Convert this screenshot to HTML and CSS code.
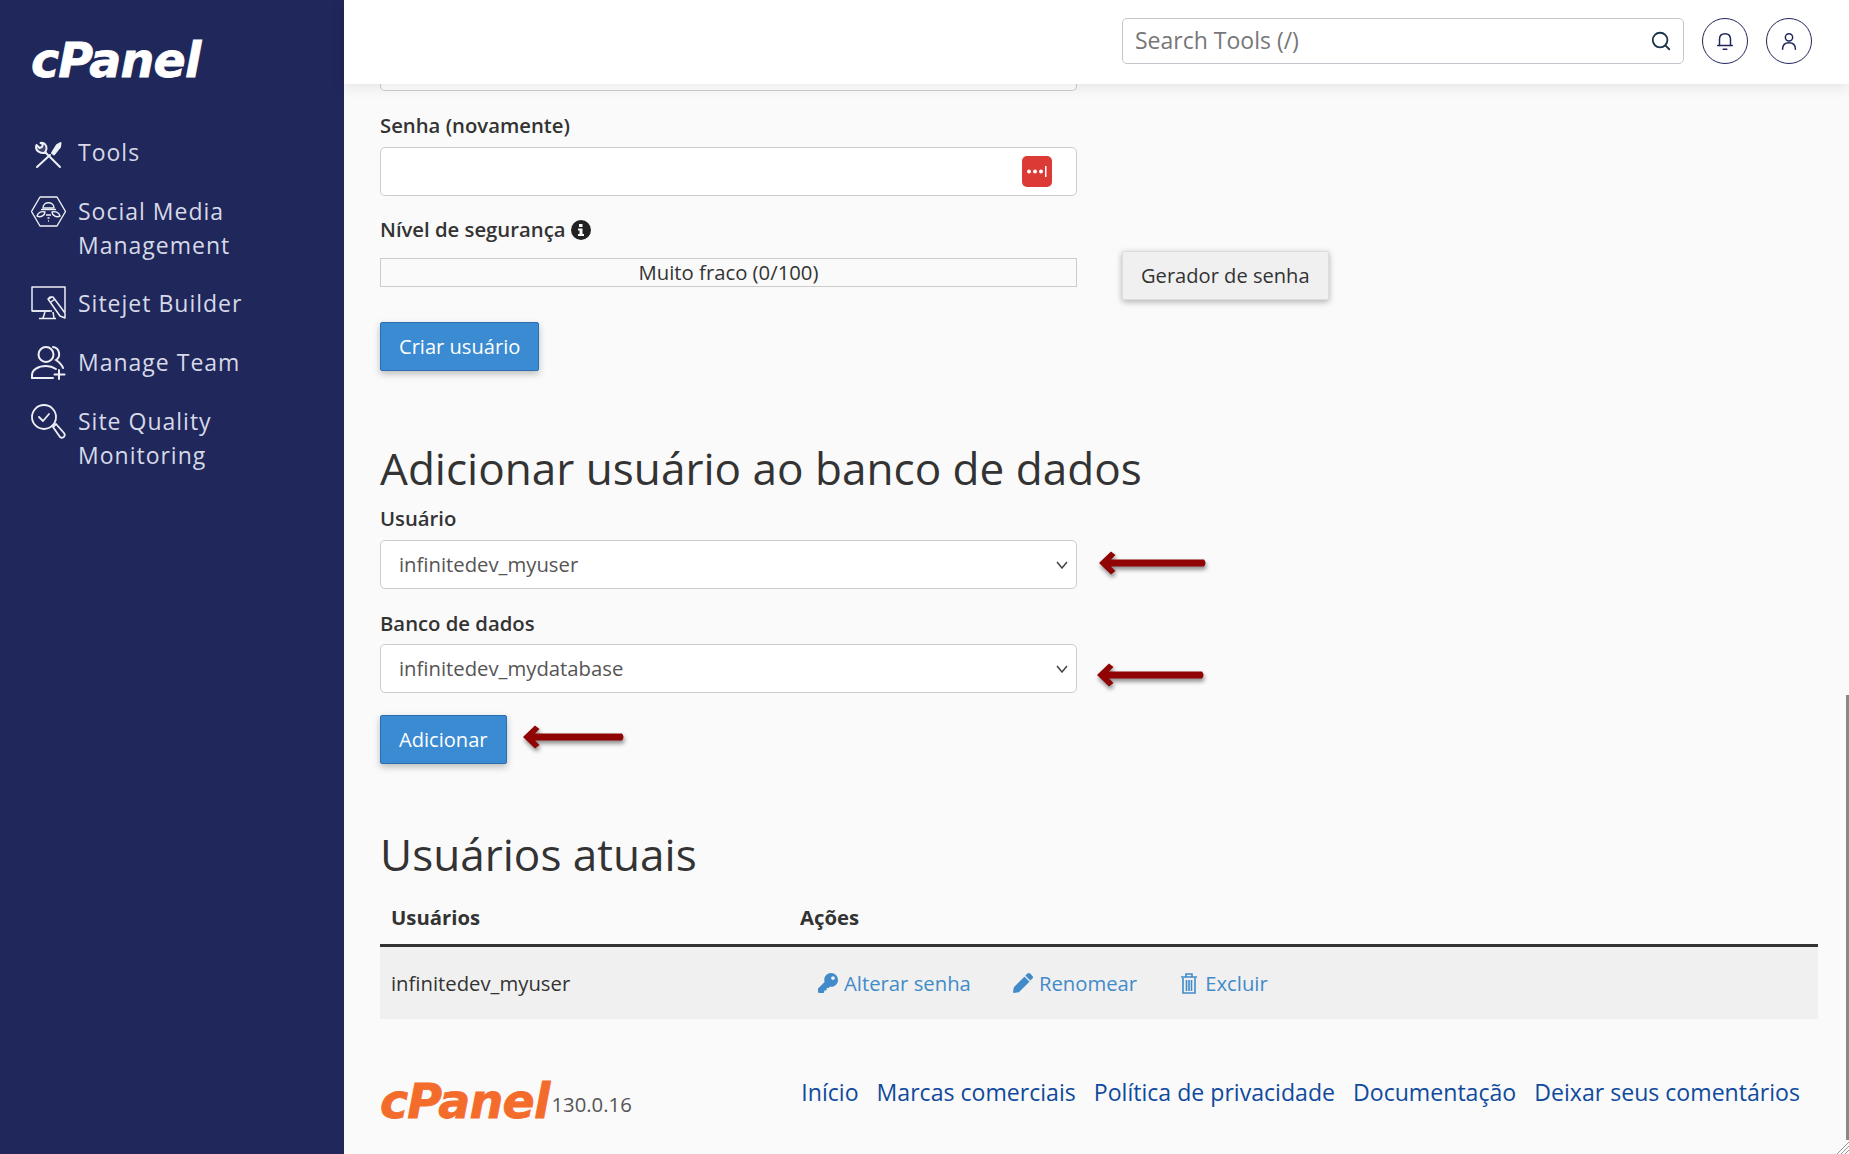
FILE: index.html
```html
<!DOCTYPE html>
<html lang="pt-BR">
<head>
  <meta charset="utf-8">
  <title>Bancos de dados MySQL - cPanel</title>
  <link rel="stylesheet" href="styles.css">
</head>
<body>
  <aside class="sidebar">
    <div class="brand">cPanel</div>
    <nav class="nav">
      <a class="nav-item">
        <svg class="nav-icon" viewBox="0 0 35 35" fill="none" stroke="currentColor" stroke-width="2" stroke-linecap="round" stroke-linejoin="round">
          <path d="M6 32 L19 20"/>
          <path d="M29 32 L14 17"/>
          <path d="M14 18 C9 18.500 5 16 5 12 L5.500 10 L8.500 13 L11 12 L12 9 L9.500 8 C13 7 16 10 15.500 14 L14 18" fill="currentColor" fill-opacity="0.15"/>
          <path d="M21 18 L26 10 L29.500 8 L29 12 L23 19.500 Z" fill="currentColor"/>
        </svg>
        <span>Tools</span>
      </a>
      <a class="nav-item">
        <svg class="nav-icon" viewBox="0 0 35 35" fill="none" stroke="currentColor" stroke-width="1.4" stroke-linejoin="round">
          <path d="M9 3 H26 L34.500 17.500 L26 32 H9 L0.500 17.500 Z"/>
          <path d="M12 14 C12 7 23 7 23 14 Z"/>
          <path d="M10 15.500 H25"/>
          <path d="M6 22 C7 18 11 17 14 18 C14 21 10 24 6 22 Z"/>
          <path d="M29 22 C28 18 24 17 21 18 C21 21 25 24 29 22 Z"/>
          <path d="M15 21 H20 M16.500 24 H18.500 M17 27 H18"/>
        </svg>
        <span>Social Media Management</span>
      </a>
      <a class="nav-item">
        <svg class="nav-icon" viewBox="0 0 35 35" fill="none" stroke="currentColor" stroke-width="1.5" stroke-linejoin="round">
          <path d="M21 25 H1 V1 H34 V26"/>
          <path d="M1 25 H19 M14 26 L12 32 M22 26 L23 32 M8 32.500 H25"/>
          <path d="M17 13 L19 11 L22 11 L34 27 L34 32 L29 30 Z" fill="#20275a"/>
          <path d="M18 13 L21 11 M20 16 L24 13"/>
        </svg>
        <span>Sitejet Builder</span>
      </a>
      <a class="nav-item">
        <svg class="nav-icon" viewBox="0 0 35 35" fill="none" stroke="currentColor" stroke-width="2" stroke-linecap="round">
          <circle cx="15" cy="9.500" r="7.500"/>
          <path d="M22 2 C29 3 30 12 25 15 C28 17 31 20 32 23"/>
          <path d="M1 33 V30 C1 25 7 21 15 21 C19 21 22 22 25 24"/>
          <path d="M1 33 H22"/>
          <path d="M28 25 V34 M23.500 29.500 H33.500"/>
        </svg>
        <span>Manage Team</span>
      </a>
      <a class="nav-item">
        <svg class="nav-icon" viewBox="0 0 35 35" fill="none" stroke="currentColor" stroke-width="1.800" stroke-linecap="round" stroke-linejoin="round">
          <circle cx="13" cy="13" r="12"/>
          <path d="M8 13 L12 17 L18 10"/>
          <path d="M22 23 L25 20 L33 29 C35 32 32 35 29 33 Z"/>
        </svg>
        <span>Site Quality Monitoring</span>
      </a>
    </nav>
  </aside>

  <div class="main">
    <header class="topbar">
      <div class="search">
        <input class="search-input" type="text" placeholder="Search Tools (/)">
        <svg class="search-icon" viewBox="0 0 24 24" fill="none" stroke="#1d3349" stroke-width="2" stroke-linecap="round">
          <circle cx="11" cy="11" r="8"/>
          <path d="M17 17 L21 21"/>
        </svg>
      </div>
      <button class="round-btn">
        <svg viewBox="0 0 24 24" fill="none" stroke="#20275a" stroke-width="1.600" stroke-linecap="round" stroke-linejoin="round">
          <path d="M6 17 V10 C6 6 8.500 4 12 4 C15.500 4 18 6 18 10 V17"/>
          <path d="M4 17 H20 M10 21 H14"/>
        </svg>
      </button>
      <button class="round-btn">
        <svg viewBox="0 0 24 24" fill="none" stroke="#20275a" stroke-width="1.600" stroke-linecap="round">
          <circle cx="12" cy="8" r="4"/>
          <path d="M5 21 C5 16 8 14 12 14 C16 14 19 16 19 21"/>
        </svg>
      </button>
    </header>

    <main class="content">
      <div class="cut-input"></div>

      <label class="field-label wide">Senha (novamente)</label>
      <div class="password-box">
        <span class="pass-badge">
          <svg viewBox="0 0 30 31" fill="#fff">
            <circle cx="7" cy="15.500" r="2"/>
            <circle cx="13" cy="15.500" r="2"/>
            <circle cx="19" cy="15.500" r="2"/>
            <rect x="23" y="10" width="1.500" height="11"/>
          </svg>
        </span>
      </div>

      <label class="field-label">Nível de segurança
        <svg class="info-icon" viewBox="0 0 20 20">
          <circle cx="10" cy="10" r="10" fill="#222"/>
          <path d="M8 4 H11.500 V7 H8 Z M7 8.500 H11.500 V14 H13 V16 H7 V14 H8.500 V10.500 H7 Z" fill="#fafafa"/>
        </svg>
      </label>
      <div class="strength-row">
        <div class="strength-bar">Muito fraco (0/100)</div>
        <button class="btn">Gerador de senha</button>
      </div>

      <button class="btn btn-primary btn-create">Criar usuário</button>

      <h2 class="section-title">Adicionar usuário ao banco de dados</h2>
      <label class="field-label tight">Usuário</label>
      <div class="select-wrap">
        <select class="field-select">
          <option>infinitedev_myuser</option>
        </select>
        <svg class="chevron" viewBox="0 0 12 8" fill="none" stroke="#444" stroke-width="1.500"><path d="M1 1 L6 7 L11 1"/></svg>
      </div>
      <label class="field-label wide">Banco de dados</label>
      <div class="select-wrap close">
        <select class="field-select">
          <option>infinitedev_mydatabase</option>
        </select>
        <svg class="chevron" viewBox="0 0 12 8" fill="none" stroke="#444" stroke-width="1.500"><path d="M1 1 L6 7 L11 1"/></svg>
      </div>
      <button class="btn btn-primary btn-add">Adicionar</button>

      <h2 class="section-title second">Usuários atuais</h2>
      <table class="users-table">
        <thead>
          <tr>
            <th class="col-user">Usuários</th>
            <th>Ações</th>
          </tr>
        </thead>
        <tbody>
          <tr>
            <td>infinitedev_myuser</td>
            <td>
              <div class="actions">
                <a class="action">
                  <svg viewBox="0 0 512 512" fill="currentColor"><path d="M512 176.001C512 273.203 433.202 352 336 352c-11.22 0-22.19-1.062-32.827-3.069l-24.012 27.014A23.999 23.999 0 0 1 261.223 384H224v40c0 13.255-10.745 24-24 24h-40v40c0 13.255-10.745 24-24 24H24c-13.255 0-24-10.745-24-24v-78.059c0-6.365 2.529-12.47 7.029-16.971l161.802-161.802C163.108 213.814 160 195.271 160 176 160 78.798 238.797.001 335.999 0 433.488-.001 512 78.511 512 176.001zM336 128c0 26.51 21.49 48 48 48s48-21.49 48-48-21.49-48-48-48-48 21.49-48 48z"/></svg>
                  Alterar senha
                </a>
                <a class="action">
                  <svg viewBox="0 0 512 512" fill="currentColor"><path d="M497.9 142.1l-46.1 46.1c-4.7 4.7-12.3 4.7-17 0l-111-111c-4.7-4.7-4.7-12.3 0-17l46.1-46.1c18.7-18.7 49.1-18.7 67.9 0l60.1 60.1c18.8 18.7 18.8 49.1 0 67.9zM284.2 99.8L21.6 362.4.4 483.9c-2.9 16.4 11.4 30.6 27.8 27.8l121.500-21.300 262.600-262.600c4.700-4.700 4.700-12.300 0-17l-111-111c-4.800-4.700-12.400-4.700-17.100 0z"/></svg>
                  Renomear
                </a>
                <a class="action">
                  <svg viewBox="0 0 18 22" fill="none" stroke="currentColor" stroke-width="1.600">
                    <path d="M1 5 H17 M6 5 V2 H12 V5"/>
                    <path d="M3 6 V21 H15 V6"/>
                    <path d="M6.500 8 V19 M9 8 V19 M11.500 8 V19"/>
                  </svg>
                  Excluir
                </a>
              </div>
            </td>
          </tr>
        </tbody>
      </table>

      <footer class="footer">
        <div class="footer-brand">
          <span class="footer-logo">cPanel</span>
          <span class="version">130.0.16</span>
        </div>
        <div class="footer-links">
          <a>Início</a>
          <a>Marcas comerciais</a>
          <a>Política de privacidade</a>
          <a>Documentação</a>
          <a>Deixar seus comentários</a>
        </div>
      </footer>

      <!-- setas vermelhas desenhadas por cima da captura -->
      <svg class="arrow arrow-user" viewBox="0 0 110 24"><path d="M1 12 L13 0.500 L17.500 4 L13 8.500 H106 Q109 12 106 15.500 H13 L17.500 20 L13 23.500 Z"/></svg>
      <svg class="arrow arrow-db" viewBox="0 0 110 24"><path d="M1 12 L13 0.500 L17.500 4 L13 8.500 H106 Q109 12 106 15.500 H13 L17.500 20 L13 23.500 Z"/></svg>
      <svg class="arrow arrow-add" viewBox="0 0 110 24"><path d="M1 12 L13 0.500 L17.500 4 L13 8.500 H100 Q103 12 100 15.500 H13 L17.500 20 L13 23.500 Z"/></svg>
    </main>

    <div class="scroll-thumb"></div>
    <svg class="resize-grip" viewBox="0 0 12 12" stroke="#999" stroke-width="1"><path d="M0 12 L12 0 M4 12 L12 4 M8 12 L12 8"/></svg>
  </div>
</body>
</html>
```

FILE: styles.css
```css
* {
  box-sizing: border-box;
}
html, body {
  height: 100%;
}
body {
  margin: 0;
  display: flex;
  overflow: hidden;
  font-family: "Open Sans", Arial, sans-serif;
  font-size: 20.3px;
  color: #333;
  background-color: #fafafa;
}

/* barra lateral */
.sidebar {
  width: 344px;
  flex-shrink: 0;
  background-color: #20275a;
  padding: 35px 30px 0 31px;
}
.brand {
  font-family: "DejaVu Sans", Arial, sans-serif;
  font-style: italic;
  font-weight: 700;
  font-size: 47.5px;
  line-height: 52px;
  letter-spacing: -0.8px;
  color: #fff;
  -webkit-text-stroke: 0.8px #fff;
}
.nav {
  margin-top: 35.5px;
}
.nav-item {
  display: flex;
  align-items: flex-start;
  gap: 12px;
  padding: 12px 0;
  font-size: 23px;
  line-height: 34px;
  letter-spacing: 1px;
  color: #d6d9e8;
}
.nav-icon {
  width: 35px;
  height: 35px;
  flex-shrink: 0;
  color: #eef0f6;
}

/* topo */
.main {
  position: relative;
  flex: 1;
  min-width: 0;
  display: flex;
  flex-direction: column;
}
.topbar {
  position: relative;
  z-index: 2;
  height: 84px;
  flex-shrink: 0;
  display: flex;
  align-items: flex-start;
  justify-content: flex-end;
  gap: 17.5px;
  padding: 18px 37px 0 0;
  background-color: #fff;
  box-shadow: 0 2px 14px rgba(0, 0, 0, 0.1);
}
.search {
  position: relative;
  width: 562px;
  height: 46px;
}
.search-input {
  width: 100%;
  height: 100%;
  padding: 0 40px 2px 12px;
  border: 1px solid #c4c4cc;
  border-radius: 5px;
  font-family: inherit;
  font-size: 23px;
  background-color: #fff;
}
.search-input::placeholder {
  color: #777;
}
.search-icon {
  position: absolute;
  top: 12px;
  right: 12px;
  width: 22px;
  height: 22px;
}
.round-btn {
  width: 46px;
  height: 46px;
  padding: 11px;
  border: 1.5px solid #20275a;
  border-radius: 50%;
  background-color: #fff;
}
.round-btn + .round-btn {
  margin-left: 1px;
}
.round-btn svg {
  display: block;
}

/* conteudo */
.content {
  position: relative;
  flex: 1;
  display: flex;
  flex-direction: column;
  align-items: flex-start;
  padding: 0 31px 0 36px;
}
.cut-input {
  width: 697px;
  height: 7px;
  flex-shrink: 0;
  background-color: #fff;
  border: 1px solid #ccc;
  border-top: none;
  border-radius: 0 0 5px 5px;
}
.field-label {
  display: flex;
  align-items: center;
  gap: 6px;
  margin-top: 20px;
  font-weight: 600;
  line-height: 27px;
  color: #333;
}
.field-label.wide {
  margin-top: 21px;
}
.field-label.tight {
  margin-top: 7px;
}
.info-icon {
  width: 20px;
  height: 20px;
}
.password-box {
  position: relative;
  width: 697px;
  height: 49px;
  margin-top: 8px;
  background-color: #fff;
  border: 1px solid #ccc;
  border-radius: 5px;
}
.pass-badge {
  position: absolute;
  top: 8px;
  right: 24px;
  width: 30px;
  height: 31px;
  background-color: #dc3a35;
  border-radius: 5px;
}
.pass-badge svg {
  display: block;
}
.strength-row {
  display: flex;
  align-items: flex-start;
  gap: 45px;
  margin-top: 8px;
}
.strength-bar {
  width: 697px;
  height: 29px;
  margin-top: 7px;
  border: 1px solid #ccc;
  background-color: #fafafa;
  text-align: center;
  line-height: 26px;
  color: #333;
}
.btn {
  height: 49px;
  padding: 0 18px;
  border: 1px solid #ddd;
  border-radius: 2px;
  font-family: inherit;
  font-size: 20.1px;
  color: #333;
  background-color: #f0f0f0;
  box-shadow: 0 2px 6px rgba(0, 0, 0, 0.3);
}
.btn-primary {
  color: #fff;
  background-color: #3a8bd2;
  border-color: #2c6eae;
  box-shadow: 0 3px 7px rgba(0, 0, 0, 0.25);
}
.btn-create {
  margin-top: 22px;
}
.btn-add {
  margin-top: 22px;
}
.section-title {
  margin: 67px 0 0;
  font-size: 44.1px;
  font-weight: 400;
  line-height: 60px;
  color: #333;
}
.section-title.second {
  margin-top: 60px;
}
.select-wrap {
  position: relative;
  width: 697px;
  height: 49px;
  margin-top: 8px;
  flex-shrink: 0;
}
.select-wrap.close {
  margin-top: 7px;
}
.field-select {
  appearance: none;
  width: 100%;
  height: 100%;
  padding: 0 13px 2px 18px;
  font-family: inherit;
  font-size: 20.3px;
  color: #555;
  background-color: #fff;
  border: 1px solid #ccc;
  border-radius: 5px;
}
.chevron {
  position: absolute;
  top: 21px;
  right: 9px;
  width: 12px;
  height: 8px;
}

/* tabela */
.users-table {
  width: 100%;
  margin-top: 7px;
  border-collapse: collapse;
}
.users-table th {
  height: 54px;
  padding: 0 11px;
  text-align: left;
  font-weight: 700;
  border-bottom: 3px solid #333;
}
.users-table .col-user {
  width: 409px;
}
.users-table td {
  height: 74px;
  padding: 0 11px;
  background-color: #f0f0f0;
}
.actions {
  display: flex;
  gap: 42px;
  padding-left: 18px;
}
.action {
  display: flex;
  align-items: center;
  gap: 6px;
  color: #428bca;
}
.action svg {
  width: 20px;
  height: 22px;
}

/* rodape */
.footer {
  width: 100%;
  display: flex;
  justify-content: space-between;
  align-items: flex-start;
  padding: 54px 18px 0 0;
}
.footer-brand {
  display: flex;
  align-items: flex-end;
  gap: 2px;
  margin-top: 9px;
}
.footer-logo {
  font-family: "DejaVu Sans", Arial, sans-serif;
  font-style: italic;
  font-weight: 700;
  font-size: 47.5px;
  line-height: 40px;
  letter-spacing: -0.8px;
  color: #f46c2b;
  -webkit-text-stroke: 0.8px #f46c2b;
}
.version {
  margin-bottom: 6.5px;
  line-height: 24px;
  color: #555;
}
.footer-links {
  display: flex;
  gap: 18px;
  font-size: 23.1px;
  line-height: 38px;
  color: #104a9c;
}

/* elementos por cima */
.arrow {
  position: absolute;
  width: 110px;
  height: 24px;
  fill: #900404;
  filter: drop-shadow(1px 3px 2px rgba(0, 0, 0, 0.45));
}
.arrow-user {
  left: 754px;
  top: 467px;
}
.arrow-db {
  left: 752px;
  top: 579px;
}
.arrow-add {
  left: 178px;
  top: 641px;
}
.scroll-thumb {
  position: absolute;
  right: 0;
  top: 695px;
  bottom: 14px;
  width: 3px;
  background-color: #888;
}
.resize-grip {
  position: absolute;
  right: 0;
  bottom: 0;
  width: 12px;
  height: 12px;
}
```
